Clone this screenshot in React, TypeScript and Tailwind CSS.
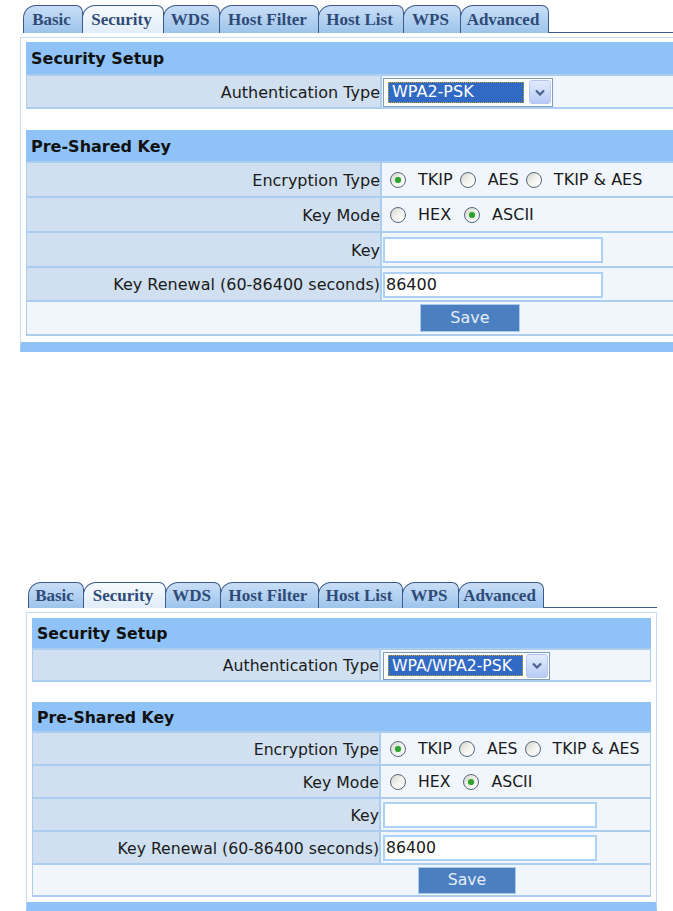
const tabs = ["Basic", "Security", "WDS", "Host Filter", "Host List", "WPS", "Advanced"];

const variants = {
  a: {
    wrap: "ml-[20px] w-[665px] pt-[5px] text-[16px]",
    tabs: "pl-[4px] h-[28px]",
    widths: ["w-[60px]", "w-[82px]", "w-[57px]", "w-[100px]", "w-[86px]", "w-[58px]", "w-[89px]"],
    box: "mt-[4px] pt-[4px] pb-[6px]",
    head: "h-[32px]",
    head2: "h-[31px]",
    auth: "h-[33px]",
    gap: "h-[21px]",
    rows: ["h-[35px]", "h-[35px]", "h-[35px]", "h-[34px]"],
    save: "h-[36px]",
    label: "w-[355px]",
    cell: "pl-[1px]",
    select: "w-[170px] h-[29px]",
    sel: "w-[136px]",
    input: "w-[220px] h-[26px]",
    btn: "ml-[393px] w-[100px] h-[28px]",
    auth_value: "WPA2-PSK",
  },
  b: {
    wrap: "ml-[26px] mt-[230px] w-[631px] text-[15.7px]",
    tabs: "pl-[3px] h-[26px]",
    widths: ["w-[56px]", "w-[83px]", "w-[56px]", "w-[99px]", "w-[85px]", "w-[57px]", "w-[86px]"],
    box: "mt-[4px] pt-[5px] pb-[5px]",
    head: "h-[30px]",
    head2: "h-[29px]",
    auth: "h-[32px]",
    gap: "h-[20px]",
    rows: ["h-[33px]", "h-[33px]", "h-[33px]", "h-[33px]"],
    save: "h-[34px]",
    label: "w-[348px]",
    cell: "pl-[2px]",
    select: "w-[167px] h-[28px]",
    sel: "w-[135px]",
    input: "w-[214px] h-[26px]",
    btn: "ml-[385px] w-[98px] h-[27px]",
    auth_value: "WPA/WPA2-PSK",
  },
};

function Radio({ on }: { on?: boolean }) {
  return (
    <span className="flex h-[16px] w-[16px] shrink-0 items-center justify-center rounded-full border border-[#56677c] bg-linear-to-br from-[#d3d3cb] via-[#f3f3ee] to-white">
      {on && <span className="h-[6px] w-[6px] rounded-full bg-[#2ca32c] shadow-[0_0_1px_#7fd67f]" />}
    </span>
  );
}

function Opt({ on, children }: { on?: boolean; children: string }) {
  return (
    <span className="flex items-center">
      <Radio on={on} />
      <span className="ml-[12px]">{children}</span>
    </span>
  );
}

function Row({ h, v, label, children }: { h: string; v: typeof variants.a; label: string; children: React.ReactNode }) {
  return (
    <div className={`flex border-t-2 border-l border-r border-[#abcdf0] ${h}`}>
      <div className={`flex shrink-0 items-center justify-end border-r-2 border-[#abcdf0] bg-[#d0e0f0] pt-[2px] ${v.label}`}>
        {label}
      </div>
      <div className={`flex flex-1 items-center bg-[#f0f6fc] pt-[1px] ${v.cell}`}>{children}</div>
    </div>
  );
}

function Panel({ kind }: { kind: "a" | "b" }) {
  const v = variants[kind];
  return (
    <div className={`font-['DejaVu_Sans',sans-serif] text-[#1a1a1a] ${v.wrap}`}>
      <div className={`flex items-end ${v.tabs}`}>
        {tabs.map((t, i) => (
          <div
            key={t}
            className={`-ml-px flex h-full items-center justify-center rounded-tl-[13px] rounded-tr-[7px] border border-b-0 border-[#3b5a8a] pr-[3px] font-['Liberation_Serif',serif] text-[17px] font-bold text-[#2f4a76] ${v.widths[i]} ${
              t === "Security"
                ? "z-10 bg-linear-to-b from-[#f6fafe] to-[#e1edf9]"
                : "border-b bg-linear-to-b from-[#c9def6] to-[#9dc4ec]"
            }`}
          >
            {t}
          </div>
        ))}
        <div className="h-full flex-1 border-b border-[#3b5a8a]" />
      </div>

      <div className={`border border-b-[10px] border-[#c6dcf4] border-b-[#8fc3f7] px-[5px] ${v.box}`}>
        <div className={`flex items-center bg-[#8fc3f7] pl-[5px] pt-[2px] font-bold text-[#111] ${v.head}`}>Security Setup</div>
        <div className="border-b-2 border-[#abcdf0]">
          <Row h={v.auth} v={v} label="Authentication Type">
            <div className={`flex items-center border border-[#7f9db9] bg-white pl-[4px] pr-[1px] ${v.select}`}>
              <span className={`flex h-[21px] items-center border border-dotted border-[#c8a032] bg-[#316ac5] pl-[3px] text-white ${v.sel}`}>
                {v.auth_value}
              </span>
              <span className="ml-auto flex h-[24px] w-[22px] items-center justify-center rounded-[3px] border border-[#b4c8f0] bg-linear-to-b from-[#e2ebfc] to-[#b7cbf5]">
                <svg width="10" height="7" viewBox="0 0 10 7">
                  <path d="M1 1.5 L5 5.5 L9 1.5" fill="none" stroke="#4b628c" strokeWidth="2.2" />
                </svg>
              </span>
            </div>
          </Row>
        </div>

        <div className={v.gap} />

        <div className={`flex items-center bg-[#8fc3f7] pl-[5px] pt-[2px] font-bold text-[#111] ${v.head2}`}>Pre-Shared Key</div>
        <Row h={v.rows[0]} v={v} label="Encryption Type">
          <div className="flex items-center gap-[7px] pl-[7px]">
            <Opt on>TKIP</Opt>
            <Opt>AES</Opt>
            <Opt>TKIP &amp; AES</Opt>
          </div>
        </Row>
        <Row h={v.rows[1]} v={v} label="Key Mode">
          <div className="flex items-center gap-[13px] pl-[7px]">
            <Opt>HEX</Opt>
            <Opt on>ASCII</Opt>
          </div>
        </Row>
        <Row h={v.rows[2]} v={v} label="Key">
          <div className={`border-2 border-[#add2f6] bg-white ${v.input}`} />
        </Row>
        <Row h={v.rows[3]} v={v} label="Key Renewal (60-86400 seconds)">
          <div className={`flex items-center border-2 border-[#add2f6] bg-white pl-[1px] ${v.input}`}>86400</div>
        </Row>
        <div className={`flex items-center border-y-2 border-l border-r border-[#abcdf0] bg-[#f0f6fc] ${v.save}`}>
          <button className={`flex items-center justify-center border border-[#a9cbee] bg-[#4b7fbf] text-[#e3edf8] ${v.btn}`}>
            Save
          </button>
        </div>
      </div>
    </div>
  );
}

export default function App() {
  return (
    <div className="h-[911px] w-[673px] overflow-hidden bg-white">
      <Panel kind="a" />
      <Panel kind="b" />
    </div>
  );
}
